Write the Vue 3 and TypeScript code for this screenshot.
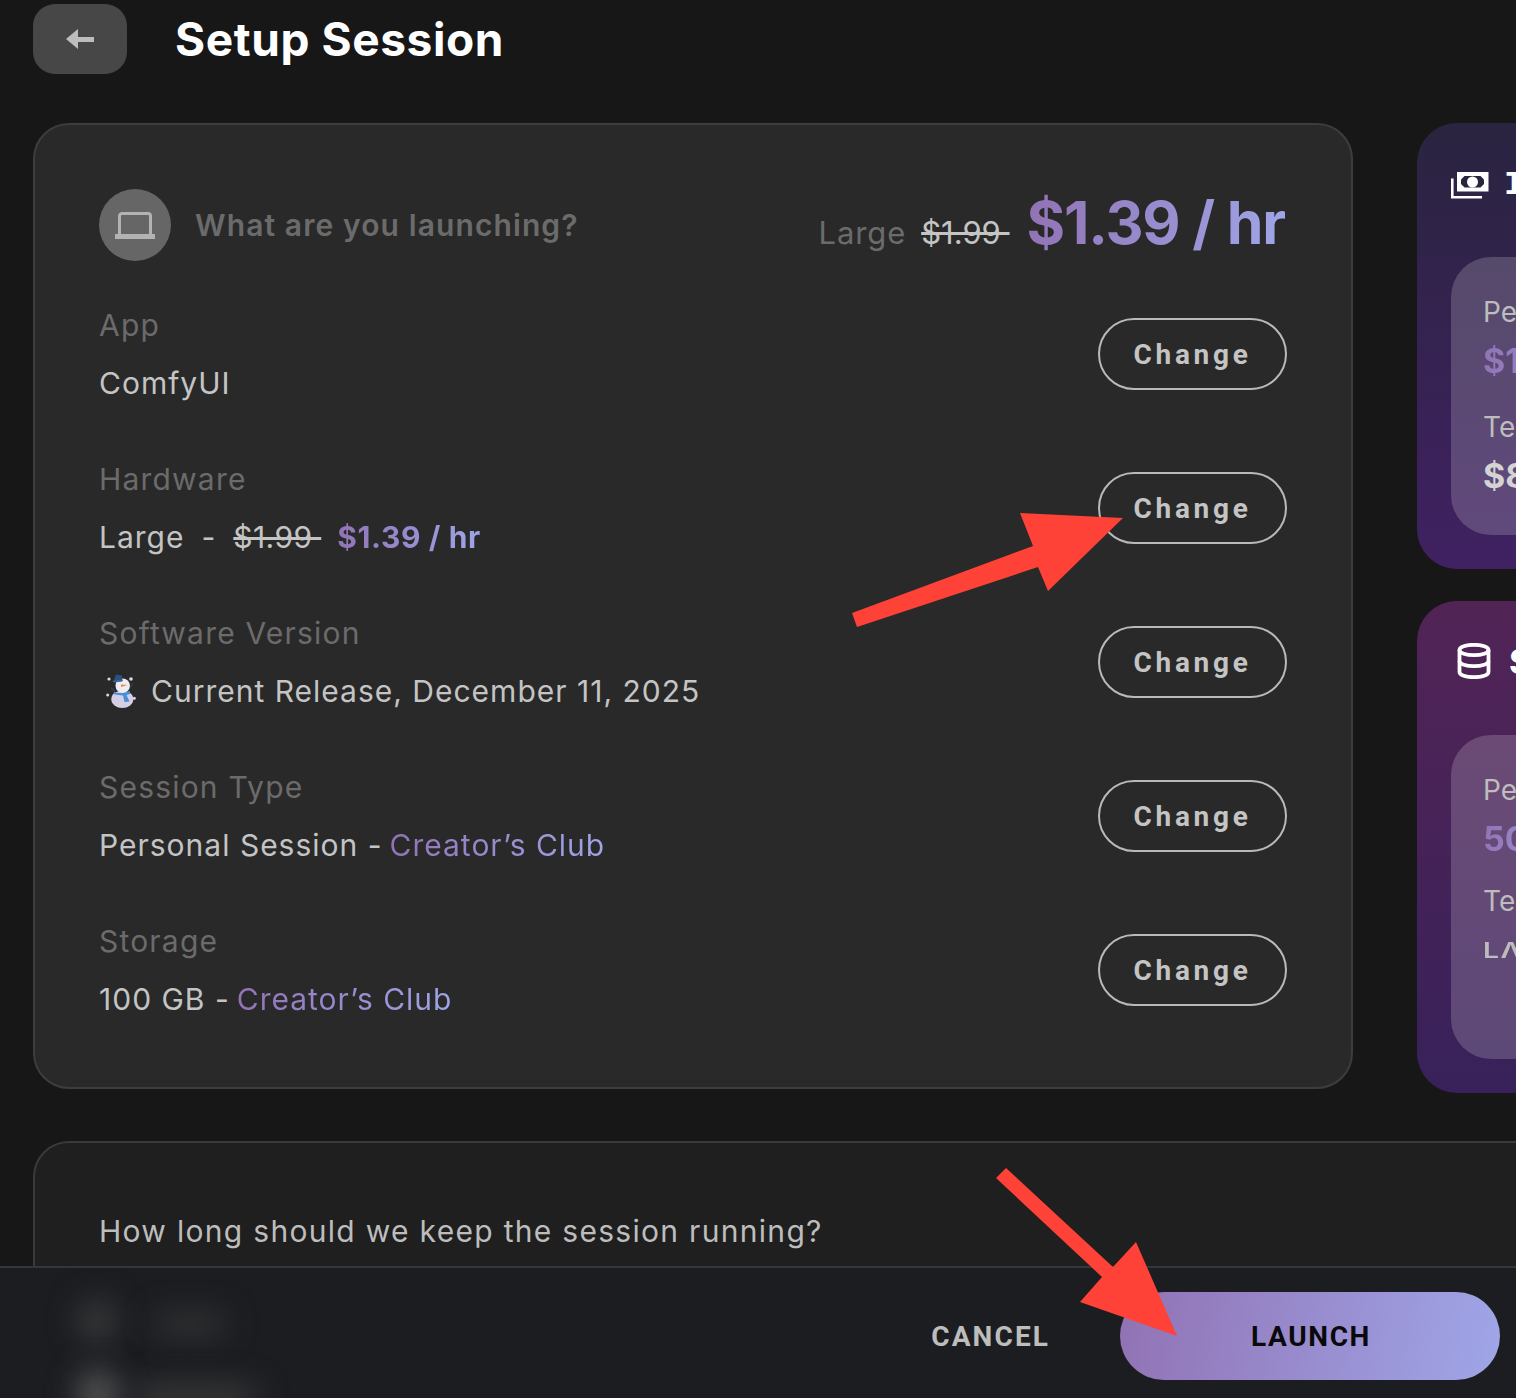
<template>
  <div class="page">
    <div class="content">
      <header class="top">
        <button class="back" aria-label="Back">
          <svg width="28" height="20" viewBox="0 0 28 20"><path d="M0 10 12 0v8h16v5H12v7z" fill="#bdbdbd" /></svg>
        </button>
        <h1 class="title">Setup Session</h1>
      </header>

      <div class="columns">
        <section class="card">
          <div class="card-head">
            <div class="avatar">
              <svg width="40" height="27" viewBox="0 0 40 27" fill="none">
                <path d="M4.500 23V4a2.500 2.500 0 0 1 2.500-2.500h26A2.500 2.500 0 0 1 35.500 4v19" stroke="#b3b3b3" stroke-width="3" />
                <path d="M0 22h40v5H0z" fill="#b3b3b3" />
              </svg>
            </div>
            <div class="question">What are you launching?</div>
            <div class="price">
              <span class="price-size">Large</span>
              <s class="price-old">$1.99&nbsp;</s>
              <span class="price-new grad">$1.39 / hr</span>
            </div>
          </div>

          <div v-for="row in rows" :key="row.label" class="row">
            <div>
              <div class="label">{{ row.label }}</div>
              <div class="value">
                <template v-if="row.label === 'Hardware'">
                  <span>Large</span>
                  <span class="dash">-</span>
                  <s class="old">$1.99&nbsp;</s>
                  <span class="rate grad">$1.39 / hr</span>
                </template>
                <template v-else>
                  <svg v-if="row.snowman" class="snowman" width="34" height="36" viewBox="0 0 34 36">
                    <circle cx="5" cy="6" r="1.600" fill="#d8dbe6" />
                    <circle cx="27" cy="6" r="1.800" fill="#d8dbe6" />
                    <circle cx="3.700" cy="22" r="1.500" fill="#d8dbe6" />
                    <circle cx="30.300" cy="25.300" r="1.500" fill="#d8dbe6" />
                    <path d="M7 15l4 3M29 11l-4 4" stroke="#3a3a44" stroke-width="1.600" />
                    <ellipse cx="18.300" cy="26.300" rx="11" ry="8.800" fill="#d5cfe6" />
                    <circle cx="18.700" cy="12.700" r="7.200" fill="#efedf3" />
                    <path d="M10 6.500 12 1.500l6 1 .5 5.500-3 .5z" fill="#2f4f80" />
                    <path d="M8.500 7.500l10.500-.5-1 1.500-8 1z" fill="#3d6aa6" />
                    <path d="M17 11.500l6.500.5-6.500 2z" fill="#e8892e" />
                    <path d="M9.500 18.500c5 2.500 11 2 16-.8l1 3-4 1.300 3 6.500-5 .5-1.500-6.500-8.500-1z" fill="#4a8fd6" />
                  </svg>
                  <span>{{ row.value }}</span>
                  <span v-if="row.club" class="club grad">{{ row.club }}</span>
                </template>
              </div>
            </div>
            <button class="change">Change</button>
          </div>
        </section>

        <aside class="side">
          <section class="side-card cost">
            <div class="side-head">
              <svg width="38" height="27" viewBox="0 0 38 27">
                <path d="M6 0h31.500v19.500H6z" fill="#fff" />
                <path d="M13.500 4h16l3.500 3.500v4.500l-3.500 3.500h-16L10 12V7.500z" fill="#2b2440" />
                <circle cx="21.500" cy="10" r="5.500" fill="#fff" />
                <path d="M1.300 6.500v18.700h29.700" fill="none" stroke="#fff" stroke-width="2.600" />
              </svg>
              <span class="mono">Instance Cost</span>
            </div>
            <div class="panel panel-cost">
              <div class="panel-label">Personal</div>
              <div class="panel-value grad">$1.39 / hr</div>
              <div class="panel-label gap">Team</div>
              <div class="panel-value">$8.00 / hr</div>
            </div>
          </section>

          <section class="side-card store">
            <div class="side-head">
              <svg class="db" width="34" height="36" viewBox="0 0 34 36" fill="none" stroke="#fff" stroke-width="3.800">
                <ellipse cx="17" cy="7" rx="14.500" ry="5.200" />
                <path d="M2.500 7v22c0 3 6.500 5.200 14.500 5.200S31.500 32 31.500 29V7" />
                <path d="M2.500 18c0 3 6.500 5.200 14.500 5.200S31.500 21 31.500 18" />
              </svg>
              <span>Storage</span>
            </div>
            <div class="panel panel-store">
              <div class="panel-label">Personal</div>
              <div class="panel-value grad">50 GB</div>
              <div class="panel-label gap">Team</div>
              <div class="panel-soon">LΛUNCHING SOON</div>
            </div>
          </section>
        </aside>
      </div>

      <section class="duration">
        <div class="duration-text">How long should we keep the session running?</div>
      </section>
    </div>

    <footer class="foot">
      <div class="blurred">
        <i class="blob b1"></i><i class="blob b2"></i>
        <i class="blob b3"></i><i class="blob b4"></i>
      </div>
      <button class="cancel">CANCEL</button>
      <button class="launch">LAUNCH</button>
    </footer>

    <!-- red annotation arrows sit on top of the screenshot -->
    <svg class="marks" width="1516" height="1398" viewBox="0 0 1516 1398">
      <polygon points="852,613 1033,546 1020,513 1123,518 1048,591 1038,567 857,627" fill="#fe4237" />
      <polygon points="1006,1168 1113,1267 1136,1242 1177,1336 1080,1302 1102,1277 996,1178" fill="#fe4237" />
    </svg>
  </div>
</template>

<script setup lang="ts">
interface Row {
  label: string
  value: string
  club?: string
  snowman?: boolean
}

const rows: Row[] = [
  { label: 'App', value: 'ComfyUI' },
  { label: 'Hardware', value: '' },
  { label: 'Software Version', value: 'Current Release, December 11, 2025', snowman: true },
  { label: 'Session Type', value: 'Personal Session -', club: 'Creator’s Club' },
  { label: 'Storage', value: '100 GB -', club: 'Creator’s Club' }
]
</script>

<style>
html,
body {
  margin: 0;
  background: #171717;
  overflow: hidden;
}
</style>

<style scoped>
.page {
  position: relative;
  width: 1516px;
  height: 1398px;
  display: flex;
  flex-direction: column;
  overflow: hidden;
  background: #171717;
  font-family: Inter, "Liberation Sans", sans-serif;
  color: #c4c4c4;
}
.content {
  flex: 1;
  min-height: 0;
  overflow: hidden;
  padding: 4px 0 0 33px;
}
button {
  font-family: inherit;
  cursor: pointer;
}
.grad {
  background: linear-gradient(100deg, #9172b4, #9fa6e8);
  -webkit-background-clip: text;
  background-clip: text;
  color: transparent;
}
.top {
  display: flex;
  align-items: center;
  gap: 48px;
  height: 70px;
  margin-bottom: 49px;
}
.back {
  width: 94px;
  height: 70px;
  border: 0;
  border-radius: 22px;
  background: #474747;
  display: flex;
  align-items: center;
  justify-content: center;
}
.title {
  margin: 0;
  font-size: 46px;
  font-weight: 700;
  letter-spacing: 0.6px;
  color: #fff;
}
.columns {
  display: grid;
  grid-template-columns: 1320px 400px;
  column-gap: 64px;
  align-items: start;
  width: 1784px;
}
.card {
  box-sizing: border-box;
  height: 966px;
  padding: 64px 64px 0;
  background: #292929;
  border: 2px solid #3d3d3d;
  border-radius: 36px;
}
.card-head {
  display: flex;
  align-items: center;
  height: 72px;
  margin-bottom: 46px;
}
.avatar {
  width: 72px;
  height: 72px;
  border-radius: 50%;
  background: #666;
  display: flex;
  align-items: center;
  justify-content: center;
}
.question {
  margin-left: 24px;
  font-size: 30px;
  font-weight: 600;
  letter-spacing: 1.1px;
  color: #6b6b6b;
}
.price {
  margin-left: auto;
  margin-right: 2px;
  padding-bottom: 6px;
  display: flex;
  align-items: baseline;
}
.price-size {
  font-size: 31px;
  letter-spacing: 0.9px;
  color: #6b6b6b;
}
.price-old {
  margin-left: 15px;
  font-size: 31px;
  white-space: pre;
  color: #c4c4c4;
}
.price-new {
  margin-left: 17px;
  font-size: 59px;
  font-weight: 700;
  letter-spacing: -1.200px;
}
.row {
  display: flex;
  align-items: center;
  justify-content: space-between;
  height: 94px;
  margin-bottom: 60px;
}
.label {
  height: 36px;
  line-height: 36px;
  margin-bottom: 22px;
  font-size: 30px;
  letter-spacing: 1.200px;
  color: #6b6b6b;
}
.value {
  display: flex;
  align-items: center;
  height: 36px;
  line-height: 36px;
  font-size: 30px;
  letter-spacing: 1px;
  color: #c4c4c4;
  white-space: nowrap;
}
.dash {
  margin: 0 17px;
}
.old {
  margin-right: 16px;
  letter-spacing: 0.4px;
  white-space: pre;
}
.rate {
  font-weight: 700;
  letter-spacing: 0.6px;
}
.snowman {
  margin: 0 13px 0 5px;
}
.club {
  margin-left: 7px;
}
.change {
  box-sizing: border-box;
  width: 189px;
  height: 72px;
  border: 2px solid #b9b9b9;
  border-radius: 36px;
  background: transparent;
  color: #c4c4c4;
  font-family: Roboto, Inter, sans-serif;
  font-size: 28px;
  font-weight: 700;
  letter-spacing: 3.700px;
}
.side {
  display: flex;
  flex-direction: column;
  gap: 32px;
}
.side-card {
  box-sizing: border-box;
  padding: 0 34px 34px;
  border-radius: 40px;
}
.cost {
  background: linear-gradient(180deg, #2a2440, #402162);
}
.store {
  background: linear-gradient(180deg, #522456, #38215a);
}
.side-head {
  display: flex;
  align-items: center;
  gap: 18px;
  font-size: 34px;
  font-weight: 700;
  color: #fff;
  white-space: nowrap;
}
.cost .side-head {
  gap: 15px;
  height: 124px;
  margin-bottom: 10px;
}
.mono {
  font-family: "Liberation Mono", monospace;
}
.store .side-head {
  height: 120px;
  margin-bottom: 14px;
}
.db {
  margin-left: 6px;
}
.panel {
  box-sizing: border-box;
  padding: 37px 32px 0;
  border-radius: 40px;
  background: rgba(255, 255, 255, 0.18);
}
.panel-cost {
  height: 278px;
}
.panel-store {
  height: 324px;
}
.panel-label {
  height: 36px;
  line-height: 36px;
  font-size: 28px;
  color: #bdbdbd;
}
.panel-value {
  display: inline-block;
  margin-top: 9px;
  height: 44px;
  line-height: 44px;
  font-size: 34px;
  font-weight: 700;
  color: #d4d4d4;
}
.panel-value.grad {
  color: transparent;
}
.gap {
  margin-top: 26px;
}
.panel-store .gap {
  margin-top: 22px;
}
.panel-soon {
  width: max-content;
  margin-top: 19px;
  font-size: 21px;
  font-weight: 600;
  letter-spacing: 1px;
  color: #bdbdbd;
  white-space: nowrap;
  transform: scaleX(1.35);
  transform-origin: left center;
}
.duration {
  width: 1600px;
  height: 400px;
  margin-top: 48px;
  box-sizing: border-box;
  padding: 70px 64px 0;
  background: #1f1f1f;
  border: 2px solid #3a3a3a;
  border-radius: 36px;
}
.duration-text {
  line-height: 36px;
  font-size: 30px;
  letter-spacing: 1.300px;
  color: #bdbdbd;
}
.foot {
  position: relative;
  box-sizing: border-box;
  flex: none;
  height: 132px;
  display: flex;
  align-items: flex-start;
  justify-content: flex-end;
  padding: 24px 16px 0 0;
  gap: 70px;
  background: #1c1d21;
  border-top: 2px solid #35363a;
}
.blurred {
  position: absolute;
  inset: 0;
  overflow: hidden;
}
.blob {
  position: absolute;
  background: #444;
  filter: blur(16px);
  border-radius: 8px;
}
.b1 {
  left: 82px;
  top: 36px;
  width: 30px;
  height: 34px;
}
.b2 {
  left: 155px;
  top: 48px;
  width: 70px;
  height: 16px;
  background: #3e3e3e;
}
.b3 {
  left: 82px;
  top: 106px;
  width: 32px;
  height: 40px;
  background: #666;
}
.b4 {
  left: 135px;
  top: 120px;
  width: 120px;
  height: 20px;
}
.cancel {
  position: relative;
  height: 88px;
  padding: 0;
  border: 0;
  background: transparent;
  color: #bdbdbd;
  font-family: Roboto, Inter, sans-serif;
  font-size: 28px;
  font-weight: 700;
  letter-spacing: 2.100px;
}
.launch {
  position: relative;
  width: 380px;
  height: 88px;
  padding: 0 0 0 2px;
  border: 0;
  border-radius: 44px;
  background: linear-gradient(100deg, #9172b4, #9fa6e8);
  color: #0a0a0a;
  font-family: Roboto, Inter, sans-serif;
  font-size: 28px;
  font-weight: 700;
  letter-spacing: 1.600px;
}
.marks {
  position: absolute;
  inset: 0;
  pointer-events: none;
}
</style>
